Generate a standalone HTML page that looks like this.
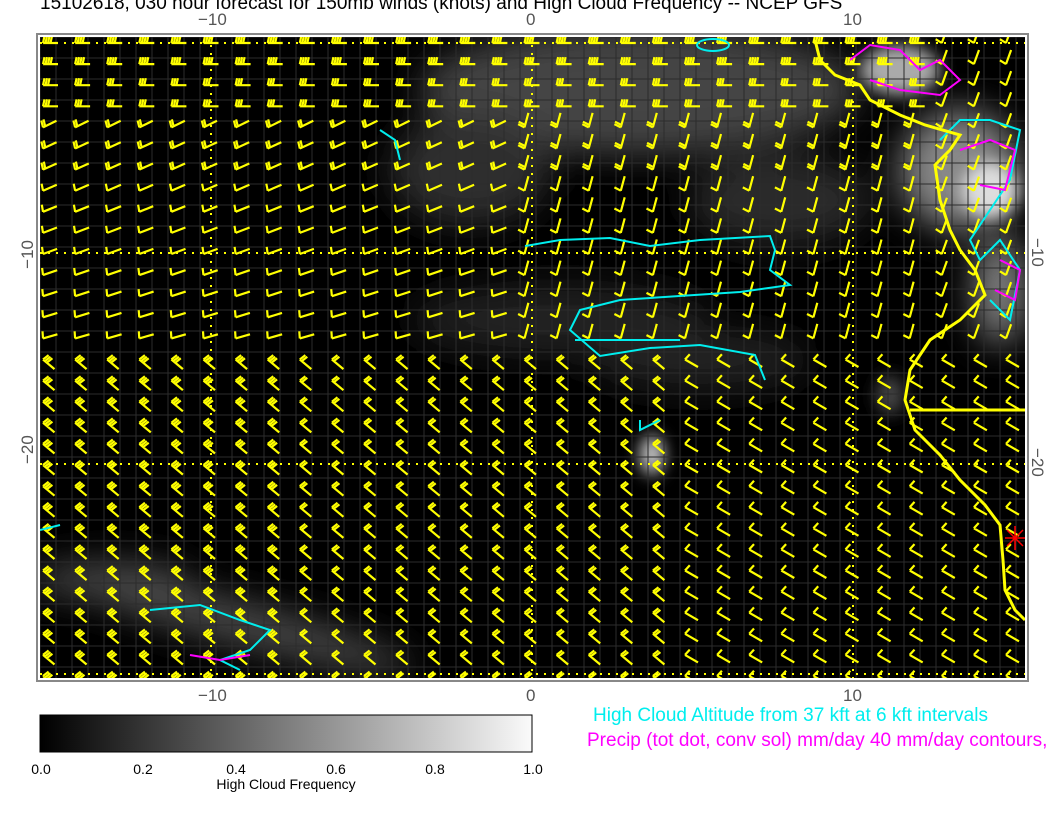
<!DOCTYPE html>
<html><head><meta charset="utf-8"><style>
body{margin:0;background:#fff;width:1056px;height:816px;overflow:hidden;font-family:"Liberation Sans",sans-serif;position:relative}
.t{position:absolute;white-space:nowrap}
</style></head><body>
<div class="t" style="left:40px;top:-7px;font-size:19px;color:#000">15102618, 030 hour forecast for 150mb winds (knots) and High Cloud Frequency -- NCEP GFS</div>
<svg id="m" width="1056" height="816" style="position:absolute;left:0;top:0">
<defs>
<filter id="b" x="-50%" y="-50%" width="200%" height="200%"><feGaussianBlur stdDeviation="18"/></filter>
<filter id="b2" x="-50%" y="-50%" width="200%" height="200%"><feGaussianBlur stdDeviation="8"/></filter>
<linearGradient id="g"><stop offset="0" stop-color="#000"/><stop offset="1" stop-color="#fafafa"/></linearGradient>
<clipPath id="c"><rect x="40" y="37" width="985" height="641"/></clipPath>
</defs>
<rect x="37" y="34" width="991" height="647" fill="none" stroke="#888" stroke-width="2"/>
<rect x="40" y="37" width="985" height="641" fill="#000"/>
<g clip-path="url(#c)">
<g filter="url(#b)" fill="#444">
<ellipse cx="640" cy="90" rx="220" ry="65"/>
<ellipse cx="470" cy="170" rx="80" ry="55" fill="#2e2e2e"/>
<ellipse cx="780" cy="200" rx="90" ry="45" fill="#2a2a2a"/>
<ellipse cx="560" cy="320" rx="150" ry="35" fill="#222"/>
<ellipse cx="700" cy="360" rx="110" ry="30" fill="#222"/>
<ellipse cx="960" cy="170" rx="60" ry="60" fill="#888"/>
<ellipse cx="1000" cy="290" rx="25" ry="55" fill="#888"/>
<ellipse cx="230" cy="620" rx="190" ry="22" fill="#484848" transform="rotate(15 230 620)"/>
<ellipse cx="110" cy="580" rx="80" ry="18" fill="#484848"/>
</g>
<g filter="url(#b2)"><ellipse cx="652" cy="455" rx="12" ry="20" fill="#ccc"/><ellipse cx="890" cy="395" rx="14" ry="20" fill="#444"/><ellipse cx="990" cy="190" rx="28" ry="28" fill="#ddd"/><ellipse cx="900" cy="70" rx="40" ry="25" fill="#aaa"/></g>
<g id="grid" stroke="#2c2c2c" stroke-width="1"></g>
<g stroke="#ff0" stroke-width="2" stroke-dasharray="2 6" fill="none">
<line x1="40" y1="43" x2="1025" y2="43"/><line x1="40" y1="253" x2="1025" y2="253"/><line x1="40" y1="464" x2="1025" y2="464"/><line x1="40" y1="674" x2="1025" y2="674"/>
<line x1="211" y1="37" x2="211" y2="678"/><line x1="532" y1="37" x2="532" y2="678"/><line x1="853" y1="37" x2="853" y2="678"/>
</g>
<g id="barbs" stroke="#ff0" stroke-width="2.2" fill="none"></g>
<g stroke="#0ee" stroke-width="2" fill="none">
<polyline points="525,246 560,240 610,238 650,246 700,240 770,236 775,250 770,270 790,285 740,292 620,300 580,310 570,330 600,356 650,348 700,345 755,355 765,380"/>
<polyline points="575,340 680,340"/>
<polyline points="380,130 395,140 400,160"/>
<polyline points="40,530 60,525"/>
<polyline points="150,610 200,605 240,620 270,630 250,650 220,660 240,670"/>
<polyline points="640,420 640,430 660,420"/>
<ellipse cx="713" cy="45" rx="16" ry="6"/>
<polyline points="940,140 960,120 990,120 1020,130 1010,180 990,210 970,240 980,260 1000,240 1020,270 1010,320 990,300"/>
</g>
<g stroke="#f0f" stroke-width="2" fill="none">
<polyline points="850,60 870,45 900,50 920,70 940,60 960,80 940,95 900,90 870,80"/>
<polyline points="960,150 990,140 1015,150 1005,190 980,185"/>
<polyline points="1000,260 1020,270 1015,300 995,290"/>
<polyline points="190,655 220,660 250,655"/>
</g>
<g stroke="#ff0" stroke-width="3" fill="none">
<polyline points="815,40 820,60 835,75 860,85 870,100 900,115 925,125 960,135 950,150 935,165 940,200 950,230 960,250 975,270 985,295 960,320 930,340 910,370 905,400 915,430 940,455 960,480 985,505 1000,525 1003,560 1005,590 1015,610 1025,620"/>
<polyline points="910,410 1025,410"/>
</g>
<g stroke="#f00" stroke-width="1.5"><line x1="1005" y1="538" x2="1025" y2="538"/><line x1="1015" y1="526" x2="1015" y2="550"/><line x1="1007" y1="530" x2="1023" y2="546"/><line x1="1023" y1="530" x2="1007" y2="546"/></g>
</g>
<g font-family="Liberation Sans" font-size="17" fill="#555">
<text x="198" y="25">−10</text><text x="526" y="25">0</text><text x="843" y="25">10</text>
<text x="198" y="701">−10</text><text x="526" y="701">0</text><text x="843" y="701">10</text>
<text transform="translate(33,240) rotate(-90)" text-anchor="end">−10</text>
<text transform="translate(33,464) rotate(-90)">−20</text>
<text transform="translate(1032,238) rotate(90)">−10</text>
<text transform="translate(1032,448) rotate(90)">−20</text>
</g>
<rect x="40" y="715" width="492" height="37" fill="url(#g)" stroke="#000"/>
<g font-family="Liberation Sans" font-size="14" fill="#000" text-anchor="middle">
<text x="41" y="774">0.0</text><text x="143" y="774">0.2</text><text x="236" y="774">0.4</text><text x="336" y="774">0.6</text><text x="435" y="774">0.8</text><text x="533" y="774">1.0</text>
<text x="286" y="789">High Cloud Frequency</text>
</g>
<text x="593" y="721" font-family="Liberation Sans" font-size="19" fill="#0ee">High Cloud Altitude from 37 kft at 6 kft intervals</text>
<text x="587" y="746" font-family="Liberation Sans" font-size="19" fill="#f0f">Precip (tot dot, conv sol) mm/day 40 mm/day contours,</text>
</svg>
<script>
var NS="http://www.w3.org/2000/svg",g=document.getElementById('grid'),b=document.getElementById('barbs');
for(var x=40;x<1025;x+=16){var l=document.createElementNS(NS,'line');l.setAttribute('x1',x);l.setAttribute('x2',x);l.setAttribute('y1',37);l.setAttribute('y2',678);g.appendChild(l);}
for(var y=37;y<678;y+=21){var l=document.createElementNS(NS,'line');l.setAttribute('y1',y);l.setAttribute('y2',y);l.setAttribute('x1',40);l.setAttribute('x2',1025);g.appendChild(l);}
var d="";
for(var r=0;r<31;r++)for(var c=0;c<31;c++){
 var x=43+c*32.1,y=43+r*21.1,a,n;
 if(r<4){a=0;n=4-Math.floor(r/2);}
 else if(r<15){a=c<15?-30+r*1:-75;n=(r<7?2:1);}
 else{a=c<20?40:30;n=c<8?3:(c<20?2:1);}
 if(c>27&&r<15){a=-70;n=1;}
 var ar=a*Math.PI/180,dx=Math.cos(ar),dy=Math.sin(ar),px=dy,py=-dx;
 d+="M"+x.toFixed(1)+" "+y.toFixed(1)+"l"+(15*dx).toFixed(1)+" "+(15*dy).toFixed(1);
 for(var k=0;k<n;k++){var fx=x+k*2.5*dx,fy=y+k*2.5*dy;d+="M"+fx.toFixed(1)+" "+fy.toFixed(1)+"l"+(7*px+1.5*dx).toFixed(1)+" "+(7*py+1.5*dy).toFixed(1);}
}
var p=document.createElementNS(NS,'path');p.setAttribute('d',d);b.appendChild(p);
</script>
</body></html>
